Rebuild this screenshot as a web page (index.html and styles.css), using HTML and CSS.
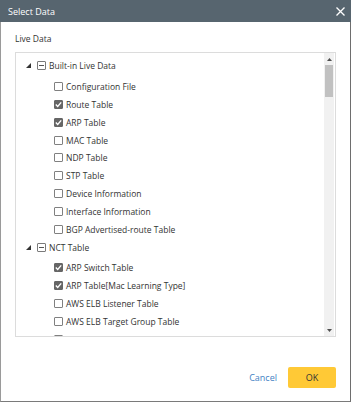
FILE: index.html
```html
<!DOCTYPE html>
<html>
<head>
<meta charset="utf-8">
<link rel="stylesheet" href="styles.css">
</head>
<body>
<div class="dialog">
  <div class="header">
    <span class="title">Select Data</span>
    <svg class="close" width="9" height="9" viewBox="0 0 9 9"><path d="M0.5 0.5 L8.5 8.5 M8.5 0.5 L0.5 8.5" stroke="#fff" stroke-width="1.3"/></svg>
  </div>
  <div class="content">
    <div class="label">Live Data</div>
    <div class="treebox">
      <div class="tree">
        <div class="node">
          <div class="row parent">
            <svg class="tri" width="5" height="5" viewBox="0 0 5 5"><polygon points="5,0 5,5 0,5" fill="#333"/></svg>
            <span class="pbox"><span class="minus"></span></span>
            <span class="txt">Built-in Live Data</span>
          </div>
          <div class="children">
            <div class="row"><span class="cb"></span><span class="txt">Configuration File</span></div>
            <div class="row"><span class="cb on"><svg width="9" height="9" viewBox="0 0 9 9"><path d="M1.8 4.6 L3.7 6.5 L7.2 2.4" stroke="#fff" stroke-width="1.4" fill="none"/></svg></span><span class="txt">Route Table</span></div>
            <div class="row"><span class="cb on"><svg width="9" height="9" viewBox="0 0 9 9"><path d="M1.8 4.6 L3.7 6.5 L7.2 2.4" stroke="#fff" stroke-width="1.4" fill="none"/></svg></span><span class="txt">ARP Table</span></div>
            <div class="row"><span class="cb"></span><span class="txt">MAC Table</span></div>
            <div class="row"><span class="cb"></span><span class="txt">NDP Table</span></div>
            <div class="row"><span class="cb"></span><span class="txt">STP Table</span></div>
            <div class="row"><span class="cb"></span><span class="txt">Device Information</span></div>
            <div class="row"><span class="cb"></span><span class="txt">Interface Information</span></div>
            <div class="row"><span class="cb"></span><span class="txt">BGP Advertised-route Table</span></div>
          </div>
        </div>
        <div class="node">
          <div class="row parent">
            <svg class="tri" width="5" height="5" viewBox="0 0 5 5"><polygon points="5,0 5,5 0,5" fill="#333"/></svg>
            <span class="pbox"><span class="minus"></span></span>
            <span class="txt">NCT Table</span>
          </div>
          <div class="children">
            <div class="row"><span class="cb on"><svg width="9" height="9" viewBox="0 0 9 9"><path d="M1.8 4.6 L3.7 6.5 L7.2 2.4" stroke="#fff" stroke-width="1.4" fill="none"/></svg></span><span class="txt">ARP Switch Table</span></div>
            <div class="row"><span class="cb on"><svg width="9" height="9" viewBox="0 0 9 9"><path d="M1.8 4.6 L3.7 6.5 L7.2 2.4" stroke="#fff" stroke-width="1.4" fill="none"/></svg></span><span class="txt">ARP Table[Mac Learning Type]</span></div>
            <div class="row"><span class="cb"></span><span class="txt">AWS ELB Listener Table</span></div>
            <div class="row"><span class="cb"></span><span class="txt">AWS ELB Target Group Table</span></div>
            <div class="row"><span class="cb"></span><span class="txt">AWS Endpoint Service Table</span></div>
          </div>
        </div>
      </div>
      <div class="scrollbar">
        <div class="arrow"><svg width="5" height="3" viewBox="0 0 5 3"><polygon points="2.5,0 5,3 0,3" fill="#505050"/></svg></div>
        <div class="thumb"></div>
        <div class="track"></div>
        <div class="arrow"><svg width="5" height="3" viewBox="0 0 5 3"><polygon points="0,0 5,0 2.5,3" fill="#505050"/></svg></div>
      </div>
    </div>
    <div class="footer">
      <span class="cancel">Cancel</span>
      <span class="ok">OK</span>
    </div>
  </div>
</div>
</body>
</html>
```

FILE: styles.css
```css
* { box-sizing: border-box; }
html, body { margin: 0; padding: 0; background: #fff; }
body { font-family: "Open Sans", "Noto Sans", sans-serif; color: #333; }

.dialog {
  width: 351px;
  height: 402px;
  border-left: 1px solid #9a9a9a;
  border-right: 1px solid #6e6e6e;
  border-bottom: 1px solid #7a7a7a;
  display: flex;
  flex-direction: column;
}

.header {
  height: 22px;
  background: #57656f;
  display: flex;
  align-items: center;
  justify-content: space-between;
  padding: 0 6px 0 8px;
  margin: 0 -1px;
}
.title { color: #fff; font-size: 9px; }
.close { display: block; }

.content {
  flex: 1;
  padding: 10px 14px 13px 14px;
  display: flex;
  flex-direction: column;
}
.label { font-size: 8.5px; line-height: 14px; height: 14px; margin-bottom: 6px; }

.treebox {
  height: 285px;
  border: 1px solid #dcdcdc;
  display: flex;
}
.tree {
  flex: 1;
  overflow: hidden;
  padding: 4px 0 0 10px;
}
.row {
  height: 17.9px;
  display: flex;
  align-items: center;
  font-size: 8.5px;
  white-space: nowrap;
}
.children { padding-left: 28px; margin-top: 2.5px; }
.tri { display: block; margin-right: 6px; }
.pbox {
  width: 9px; height: 9px;
  border: 1px solid #7a7a7a;
  border-radius: 1px;
  display: flex;
  align-items: center;
  justify-content: center;
  margin-right: 3px;
}
.minus { width: 5px; height: 1px; background: #555; }
.cb {
  width: 9px; height: 9px;
  border: 1px solid #808080;
  border-radius: 1px;
  margin-right: 3px;
  flex: none;
  display: flex;
}
.cb.on { background: #666; border-color: #666; }
.cb.on svg { margin: -1px; display: block; }

.scrollbar {
  width: 10px;
  background: #f1f1f1;
  display: flex;
  flex-direction: column;
  margin-right: 1px;
}
.arrow { height: 12px; display: flex; align-items: center; justify-content: center; }
.thumb { height: 32px; background: #c1c1c1; margin: 0 1px; }
.track { flex: 1; }

.footer {
  margin-top: auto;
  display: flex;
  justify-content: flex-end;
  align-items: center;
  gap: 11px;
}
.cancel { color: #3f7fc4; font-size: 9px; }
.ok {
  width: 48px; height: 21px;
  background: #ffc936;
  border-radius: 2px;
  display: flex;
  align-items: center;
  justify-content: center;
  font-size: 9px;
  color: #333;
}
```
